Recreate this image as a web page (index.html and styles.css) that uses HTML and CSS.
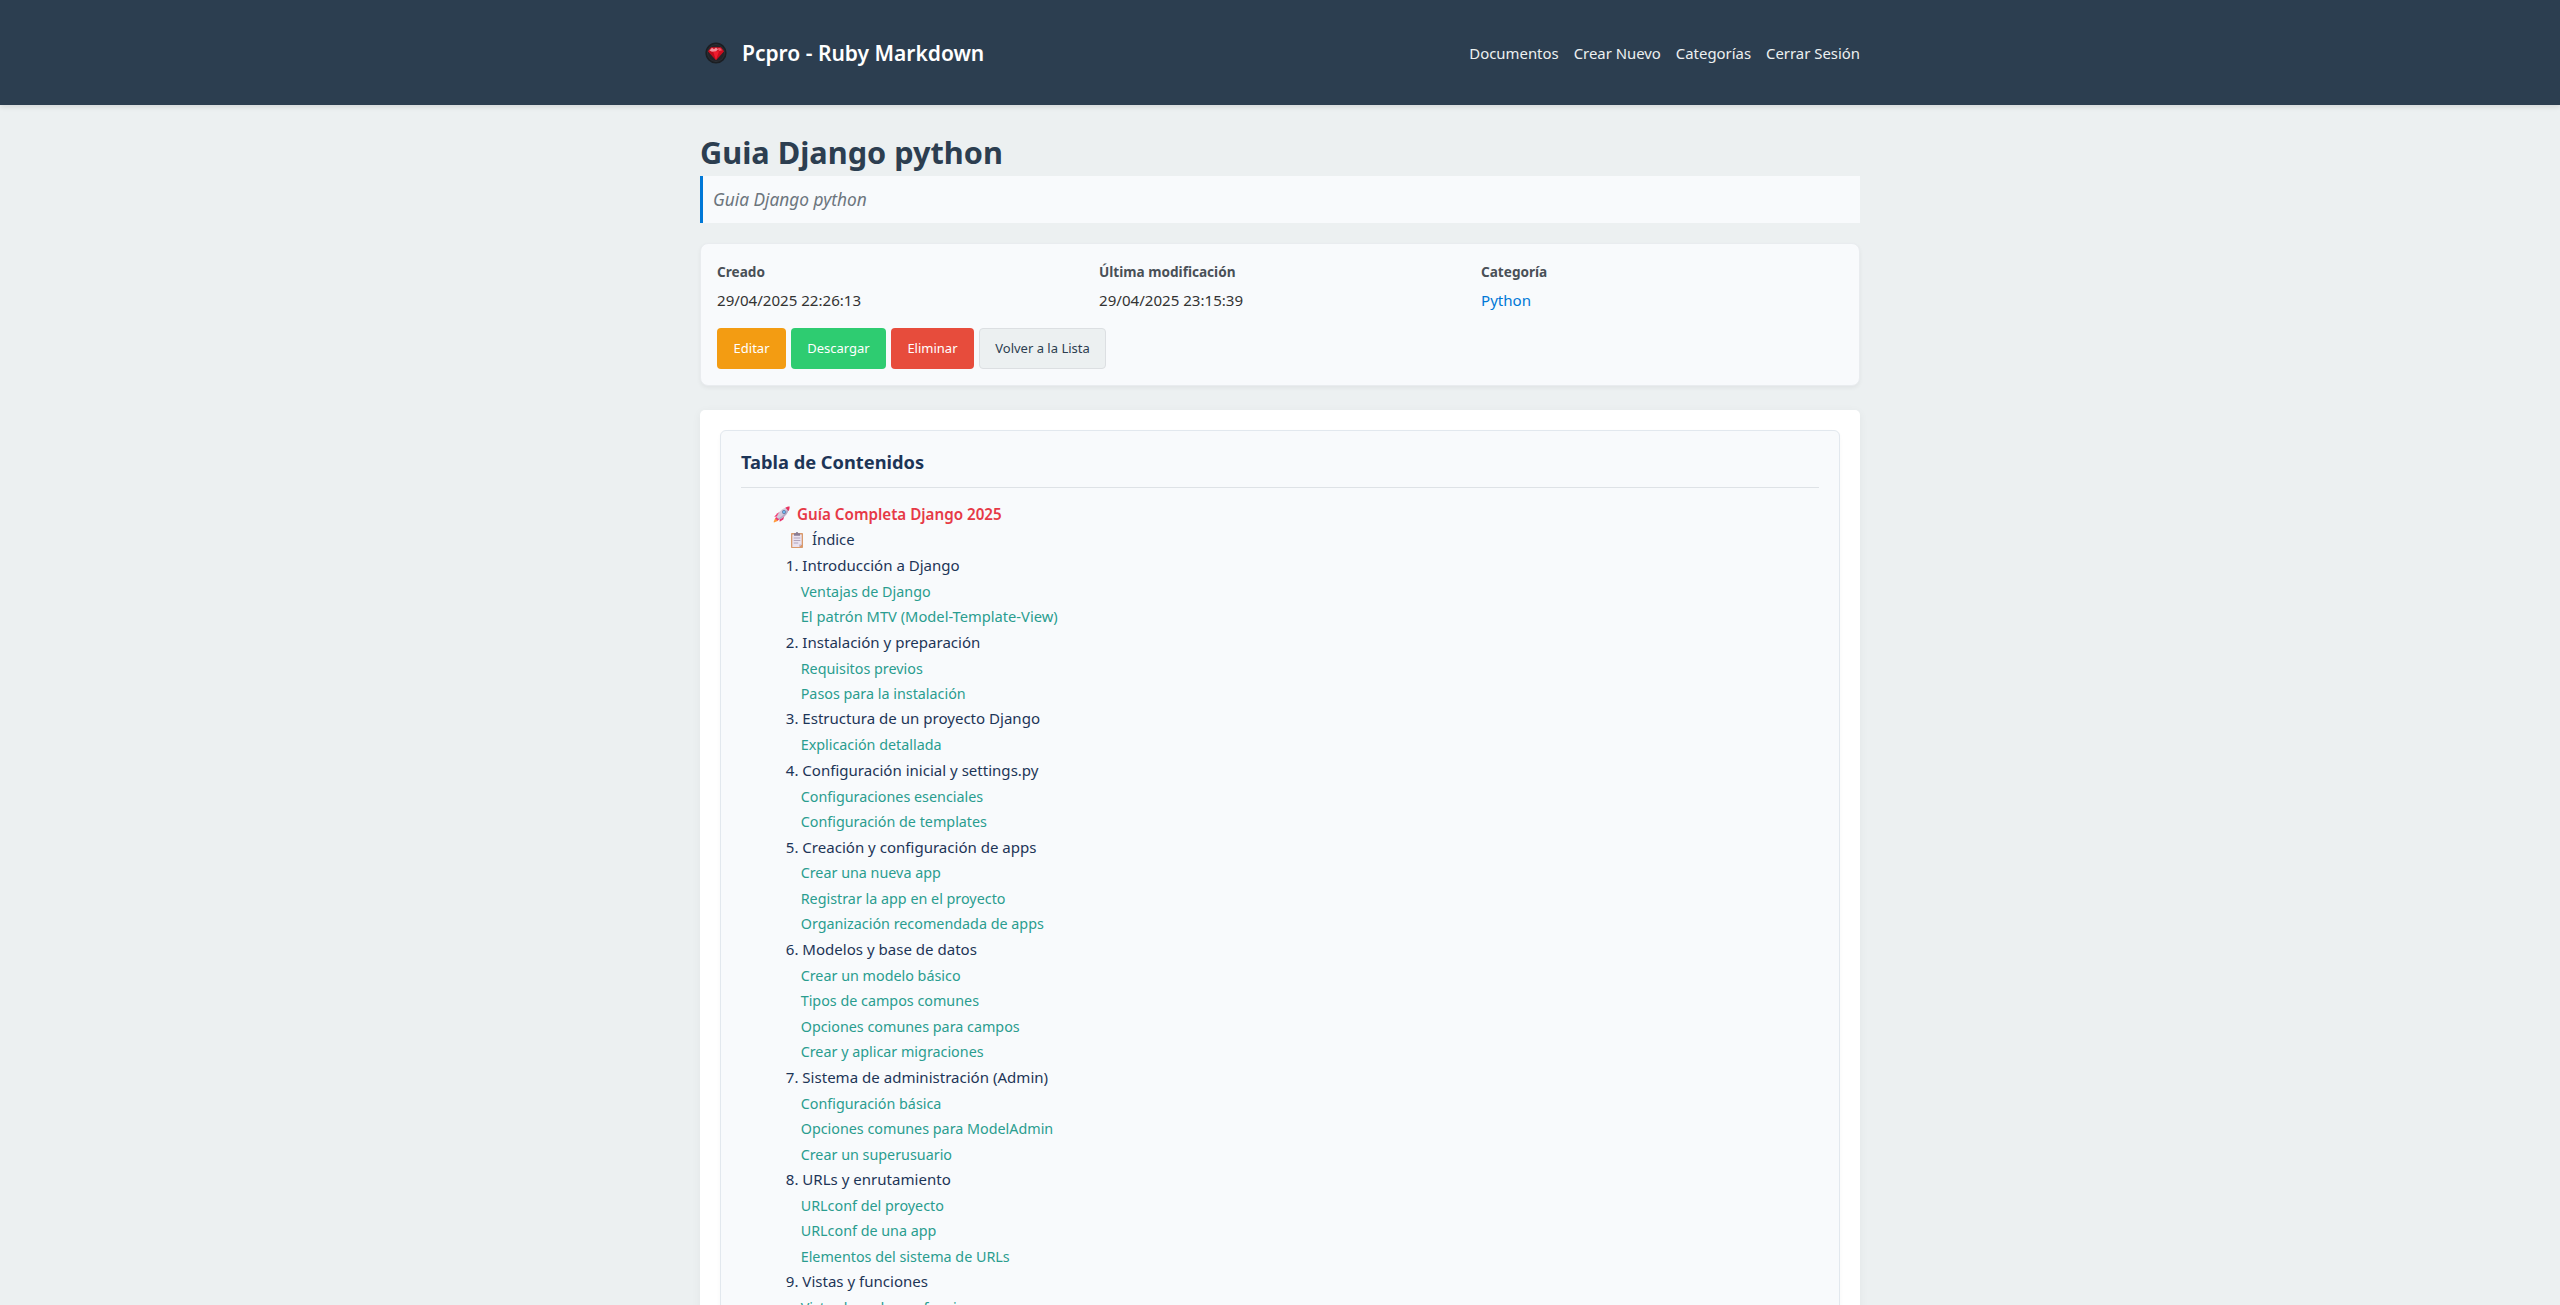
FILE: index.html
```html
<!DOCTYPE html>
<html lang="es">
<head>
<meta charset="utf-8">
<title>Guia Django python</title>
<link rel="stylesheet" href="styles.css">
</head>
<body>
<header class="site-header">
  <div class="container header-row">
    <a class="brand">
      <svg class="brand-logo" viewBox="0 0 22 22">
        <circle cx="11" cy="11" r="9.8" fill="#2b2f35" stroke="#1b1e22" stroke-width="1.6"/>
        <circle cx="11" cy="11" r="8" fill="#252328"/>
        <path d="M6 5.2h10l3 4.100-8 8.700-8-8.700z" fill="#d20f20"/>
        <path d="M3 9.300h5l3 8.700z" fill="#c00c1c"/>
        <path d="M14 9.300h5l-8 8.700z" fill="#c80d1d"/>
        <path d="M8 9.300h6l-3 8.700z" fill="#ef1c2e"/>
        <path d="M4.500 8.400L7 5.700l2 1.500 2-1.700 2 2-2 1.800-4 .5z" fill="#f4909b"/>
        <path d="M12.500 6.300l2.600-.3 2 2.200-3 .8z" fill="#ee5563"/>
      </svg>
      <span>Pcpro - Ruby Markdown</span>
    </a>
    <nav class="nav"><a>Documentos</a><a>Crear Nuevo</a><a>Categorías</a><a>Cerrar Sesión</a></nav>
  </div>
</header>

<main class="container">
  <h1 class="title">Guia Django python</h1>
  <p class="description">Guia Django python</p>

  <section class="meta">
    <div class="meta-grid">
      <div><div class="label">Creado</div><div class="value">29/04/2025 22:26:13</div></div>
      <div><div class="label">Última modificación</div><div class="value">29/04/2025 23:15:39</div></div>
      <div><div class="label">Categoría</div><div class="value"><a class="link">Python</a></div></div>
    </div>
    <div class="actions">
      <a class="btn btn-edit">Editar</a>
      <a class="btn btn-download">Descargar</a>
      <a class="btn btn-delete">Eliminar</a>
      <a class="btn btn-back">Volver a la Lista</a>
    </div>
  </section>

  <article class="content">
    <div class="toc">
      <h2 class="toc-title">Tabla de Contenidos</h2>
      <ul class="toc-list">
        <li class="lvl1">
          <svg class="rocket" viewBox="0 0 17 17">
            <path d="M4.500 7.300L7 5.800 5 10.500 1.200 10.800z" fill="#f0356f"/>
            <path d="M6.500 12l4.800-2-1 3.500-3.600 2.300z" fill="#e8316b"/>
            <path d="M2.200 12l3 2.700L1 16.400l-.4-.5z" fill="#ff9a3c"/>
            <path d="M3.600 11.500C4.500 7.500 8 3 13.300 1.400l2.400 2.200C14.500 8.600 10.500 12 5.900 13.700z" fill="#d3c9dc"/>
            <path d="M4.800 12.600C8 11.500 12.500 8 14.500 2.600l1.200 1C14.500 8.600 10.500 12 5.900 13.700z" fill="#b5a8c3"/>
            <path d="M12.300 1.800c1.600-1 3.400-1.300 4.300-1.200.1 1.200-.2 2.900-1 4.300z" fill="#e8335f"/>
            <circle cx="11" cy="6" r="1.900" fill="#55749c"/>
            <circle cx="11" cy="6" r="1.200" fill="#6db8f2"/>
            <path d="M3.300 10.900l2.800 2.600-1.500 1.200-2.500-2.400z" fill="#ef3370"/>
          </svg>
          <span>Guía Completa Django 2025</span>
        </li>
        <li class="lvl2 index">
          <svg class="clipboard" viewBox="0 0 12 16">
            <rect x="0" y="1" width="12" height="15" rx=".8" fill="#d99a6c"/>
            <path d="M1.300 2.500h9.400v10l-2.400 2.400h-7z" fill="#eae2f0"/>
            <path d="M8.300 14.900v-2.400h2.400z" fill="#bcaec8"/>
            <path d="M3 1.200h1.700Q5 0 6 0t1.300 1.200H9v2.500H3z" fill="#8a7d94"/>
            <path d="M2.700 6h6.600M2.700 8.500h6.600M2.700 11h4.500" stroke="#aa9db6" stroke-width=".9"/>
          </svg>
          <span>Índice</span>
        </li>
        <li class="lvl2">1. Introducción a Django</li>
        <li class="lvl3">Ventajas de Django</li>
        <li class="lvl3 wide">El patrón MTV (Model-Template-View)</li>
        <li class="lvl2">2. Instalación y preparación</li>
        <li class="lvl3">Requisitos previos</li>
        <li class="lvl3">Pasos para la instalación</li>
        <li class="lvl2">3. Estructura de un proyecto Django</li>
        <li class="lvl3">Explicación detallada</li>
        <li class="lvl2">4. Configuración inicial y settings.py</li>
        <li class="lvl3">Configuraciones esenciales</li>
        <li class="lvl3">Configuración de templates</li>
        <li class="lvl2">5. Creación y configuración de apps</li>
        <li class="lvl3">Crear una nueva app</li>
        <li class="lvl3">Registrar la app en el proyecto</li>
        <li class="lvl3">Organización recomendada de apps</li>
        <li class="lvl2">6. Modelos y base de datos</li>
        <li class="lvl3">Crear un modelo básico</li>
        <li class="lvl3">Tipos de campos comunes</li>
        <li class="lvl3">Opciones comunes para campos</li>
        <li class="lvl3">Crear y aplicar migraciones</li>
        <li class="lvl2">7. Sistema de administración (Admin)</li>
        <li class="lvl3">Configuración básica</li>
        <li class="lvl3">Opciones comunes para ModelAdmin</li>
        <li class="lvl3">Crear un superusuario</li>
        <li class="lvl2">8. URLs y enrutamiento</li>
        <li class="lvl3">URLconf del proyecto</li>
        <li class="lvl3">URLconf de una app</li>
        <li class="lvl3">Elementos del sistema de URLs</li>
        <li class="lvl2">9. Vistas y funciones</li>
        <li class="lvl3">Vistas basadas en funciones</li>
      </ul>
    </div>
  </article>
</main>
</body>
</html>
```
FILE: styles.css
```css
* { box-sizing: border-box; margin: 0; padding: 0; }

body {
  height: 1305px;
  overflow: hidden;
  background: #ecf0f1;
  color: #333;
  font-family: "Noto Sans", "Open Sans", sans-serif;
  font-size: 15px;
}

.container { width: 1160px; margin: 0 auto; }

.site-header {
  height: 105px;
  background: #2c3e50;
  box-shadow: 0 2px 5px rgba(0, 0, 0, 0.1);
}
.header-row {
  height: 100%;
  display: flex;
  align-items: center;
  justify-content: space-between;
}
.brand {
  display: flex;
  align-items: center;
  gap: 15px;
  padding-left: 5px;
  color: #fff;
  font-size: 21px;
  font-weight: 600;
}
.brand-logo { width: 22px; height: 22px; }
.nav { display: flex; gap: 15px; padding-top: 1px; font-size: 14.9px; color: #ecf0f1; }

.title {
  margin-top: 23px;
  line-height: 48px;
  font-size: 30.7px;
  font-weight: 700;
  color: #2c3e50;
}
.description {
  height: 47px;
  padding-left: 10px;
  border-left: 3px solid #0078d7;
  background: #f8fafc;
  line-height: 47px;
  font-size: 17.3px;
  font-style: italic;
  color: #6c757d;
}

.meta {
  margin-top: 20px;
  padding: 16px;
  border: 1px solid #e9ecef;
  border-radius: 8px;
  background: #f8fafc;
  box-shadow: 0 2px 4px rgba(0, 0, 0, 0.05);
}
.meta-grid { display: grid; grid-template-columns: repeat(3, 1fr); gap: 20px; }
.label { line-height: 24px; font-size: 13.6px; font-weight: 700; color: #495057; }
.value { margin-top: 4px; line-height: 25px; font-size: 15.1px; }
.link { color: #0078d7; }

.actions { display: flex; gap: 4.500px; margin-top: 15px; }
.btn {
  height: 41px;
  padding: 0 15.600px;
  border: 1px solid transparent;
  border-radius: 4px;
  line-height: 39px;
  font-size: 13px;
  color: #fff;
}
.btn-edit { background: #f39c12; }
.btn-download { background: #2ecc71; }
.btn-delete { background: #e74c3c; }
.btn-back { background: #ecf0f1; border-color: #dcdfe2; color: #2c3e50; }

.content {
  margin-top: 24px;
  padding: 20px;
  border-radius: 5px;
  background: #fff;
  box-shadow: 0 2px 10px rgba(0, 0, 0, 0.05);
}
.toc {
  padding: 20px;
  border: 1px solid #e2e8ee;
  border-radius: 6px;
  background: #f8fafc;
  box-shadow: 0 2px 4px rgba(0, 0, 0, 0.03);
}
.toc-title {
  padding-bottom: 14px;
  border-bottom: 1px solid #dee2e6;
  line-height: 22px;
  font-size: 18.25px;
  font-weight: 700;
  color: #1d3557;
}
.toc-list { margin-top: 13px; list-style: none; }
.lvl1, .lvl2, .lvl3 { white-space: nowrap; }
.lvl1 {
  display: flex;
  align-items: center;
  gap: 7px;
  padding-left: 32px;
  line-height: 26px;
  font-size: 15.2px;
  font-weight: 600;
  color: #e63946;
}
.lvl2 { padding-left: 44.800px; line-height: 25.85px; font-size: 15.05px; color: #1d3557; }
.lvl3 { padding-left: 59.700px; line-height: 25.48px; font-size: 14.33px; color: #2a9d8f; }
.wide { font-size: 14.7px; }
.index { display: flex; align-items: center; gap: 9px; padding-left: 50px; font-size: 14.8px; }
.rocket { width: 17px; height: 17px; }
.clipboard { width: 12px; height: 16px; }
```
